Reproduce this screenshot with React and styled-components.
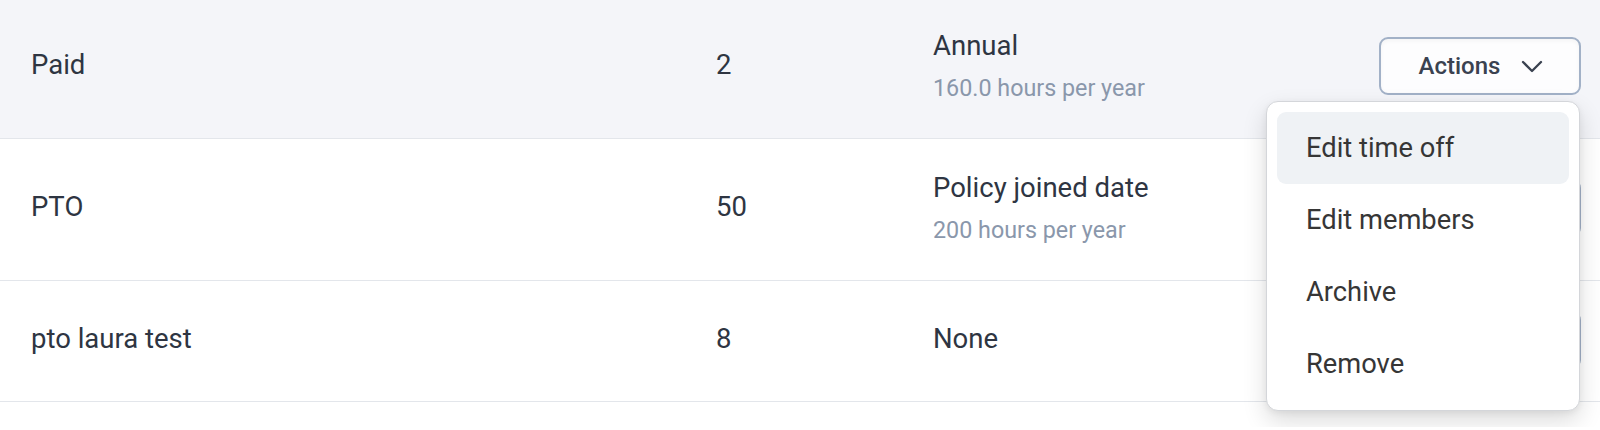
import React from "react";
import styled, { createGlobalStyle } from "styled-components";

const Global = createGlobalStyle`
  html, body { margin: 0; padding: 0; background: #ffffff; }
  body { font-family: Roboto, "Noto Sans", "Liberation Sans", sans-serif; }
  #root { min-height: 430px; }
  * { box-sizing: border-box; }
`;

const Table = styled.div`
  margin-top: -3px;
  display: flex;
  flex-direction: column;
`;

const Row = styled.div`
  position: relative;
  z-index: ${(p) => (p.$active ? 2 : 1)};
  display: grid;
  grid-template-columns: 685px 217px 1fr auto;
  align-items: center;
  height: ${(p) => (p.$tall ? "142px" : "121px")};
  padding: 0 19px 0 31px;
  border-bottom: 1px solid #e3e6eb;
  background: ${(p) => (p.$active ? "#f4f5f9" : "#ffffff")};
`;

const Cell = styled.div`
  font-size: 27.5px;
  line-height: 38px;
  color: #2e3542;
  font-weight: 400;
  padding-bottom: 5px;
`;

const Sub = styled.div`
  font-size: 23.3px;
  line-height: 32px;
  color: #8a97ab;
  margin-top: 7px;
`;

const ActionsCell = styled.div`
  position: relative;
  display: flex;
  justify-content: flex-end;
  padding-bottom: 3px;
`;

const ActionButton = styled.button`
  width: 202px;
  height: 58px;
  display: flex;
  align-items: center;
  justify-content: center;
  gap: 21px;
  border: 2px solid #a2b1c7;
  border-radius: 9px;
  background: #fdfdfe;
  box-shadow: inset 0 2px 4px rgba(0, 0, 0, 0.04);
  font-family: inherit;
  font-size: 24px;
  font-weight: 500;
  color: #3a4250;
  padding: 0 0 0 2px;
  cursor: pointer;
`;

const Menu = styled.div`
  position: absolute;
  top: 64px;
  right: 1px;
  width: 314px;
  padding: 10px;
  background: #ffffff;
  border: 1px solid #d4d6da;
  border-radius: 12px;
  box-shadow: 0 10px 24px rgba(0, 0, 0, 0.14), 0 2px 6px rgba(0, 0, 0, 0.06);
  display: flex;
  flex-direction: column;
  z-index: 10;
`;

const MenuItem = styled.div`
  height: 72px;
  flex: none;
  display: flex;
  align-items: center;
  padding-left: 29px;
  border-radius: 9px;
  font-size: 27.3px;
  color: #363636;
  background: ${(p) => (p.$hover ? "#eff2f5" : "transparent")};
`;

const Chevron = () => (
  <svg width="22" height="13" viewBox="0 0 22 13" fill="none">
    <polyline points="2,2 11,11 20,2" stroke="#3a4250" strokeWidth="2.3" strokeLinecap="round" strokeLinejoin="round" />
  </svg>
);

const rows = [
  { name: "Paid", count: "2", accrual: "Annual", sub: "160.0 hours per year", active: true },
  { name: "PTO", count: "50", accrual: "Policy joined date", sub: "200 hours per year" },
  { name: "pto laura test", count: "8", accrual: "None" },
];

export default function App() {
  return (
    <>
      <Global />
      <Table>
        {rows.map((r, i) => (
          <Row key={r.name} $tall={!!r.sub} $active={r.active}>
            <Cell>{r.name}</Cell>
            <Cell>{r.count}</Cell>
            <Cell>
              {r.accrual}
              {r.sub && <Sub>{r.sub}</Sub>}
            </Cell>
            <ActionsCell>
              <ActionButton>
                Actions
                <Chevron />
              </ActionButton>
              {i === 0 && (
                <Menu>
                  <MenuItem $hover>Edit time off</MenuItem>
                  <MenuItem>Edit members</MenuItem>
                  <MenuItem>Archive</MenuItem>
                  <MenuItem>Remove</MenuItem>
                </Menu>
              )}
            </ActionsCell>
          </Row>
        ))}
      </Table>
    </>
  );
}
